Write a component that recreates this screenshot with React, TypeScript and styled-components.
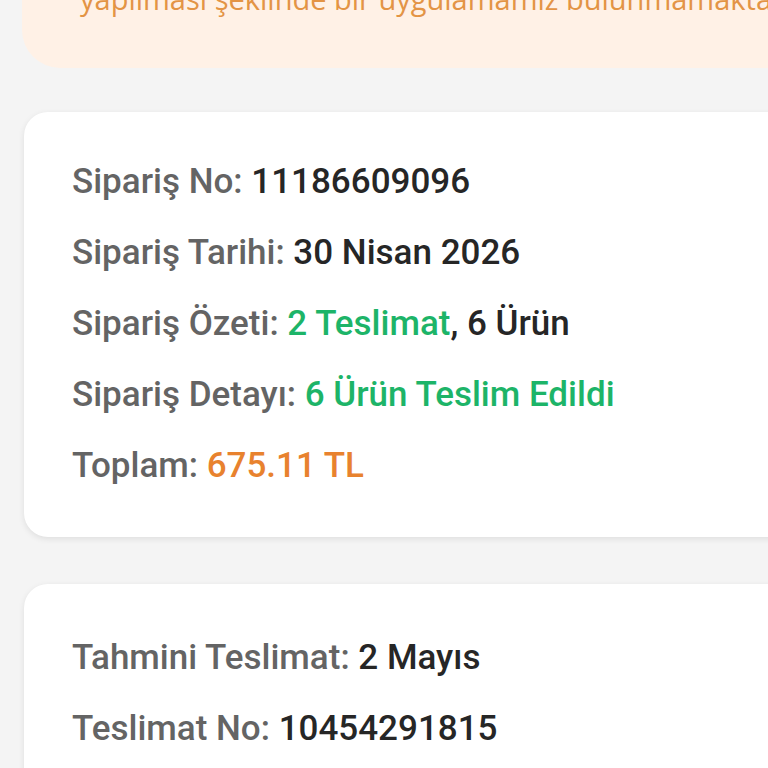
import React from "react";
import styled, { createGlobalStyle } from "styled-components";

const GlobalStyle = createGlobalStyle`
  html, body {
    margin: 0;
    padding: 0;
    background-color: #f4f4f4;
    overflow: hidden;
  }
`;

type Tone = "dark" | "green" | "orange";

const toneColor: Record<Tone, string> = {
  dark: "#262626",
  green: "#1db468",
  orange: "#e8822e",
};

const App: React.FC = () => {
  return (
    <>
      <GlobalStyle />
      <Page>
        <Notice>
          <NoticeText>yapılması şeklinde bir uygulamamız bulunmamaktadır.</NoticeText>
        </Notice>

        <OrderCard>
          <Row>
            <Label>Sipariş No: </Label>
            <Value>11186609096</Value>
          </Row>
          <Row>
            <Label>Sipariş Tarihi: </Label>
            <Value>30 Nisan 2026</Value>
          </Row>
          <Row>
            <Label>Sipariş Özeti: </Label>
            <Value $tone="green">2 Teslimat</Value>
            <Value>, 6 Ürün</Value>
          </Row>
          <Row>
            <Label>Sipariş Detayı: </Label>
            <Value $tone="green">6 Ürün Teslim Edildi</Value>
          </Row>
          <Row>
            <Label>Toplam: </Label>
            <Value $tone="orange">675.11 TL</Value>
          </Row>
        </OrderCard>

        <DeliveryCard>
          <Row>
            <Label>Tahmini Teslimat: </Label>
            <Value>2 Mayıs</Value>
          </Row>
          <Row>
            <Label>Teslimat No: </Label>
            <Value>10454291815</Value>
          </Row>
        </DeliveryCard>
      </Page>
    </>
  );
};

export default App;

const Page = styled.div`
  width: 820px;
  height: 768px;
  overflow: hidden;
  display: flex;
  flex-direction: column;
  font-family: Roboto, "Noto Sans", sans-serif;
`;

const Notice = styled.div`
  margin: -21px 0 0 22px;
  padding: 0 0 49px 58px;
  background-color: #fff1e6;
  border-radius: 0 0 0 38px;
`;

const NoticeText = styled.div`
  font-family: "Open Sans", "Noto Sans", sans-serif;
  font-size: 29px;
  line-height: 40px;
  color: #e39445;
  white-space: nowrap;
`;

const Card = styled.div`
  margin-left: 24px;
  background-color: #ffffff;
  border-radius: 24px;
  box-shadow: rgba(0, 0, 0, 0.09) 0px 2px 6px;
  padding-left: 48px;
  display: flex;
  flex-direction: column;
`;

const OrderCard = styled(Card)`
  margin-top: 44px;
  padding-top: 34px;
  padding-bottom: 36px;
`;

const DeliveryCard = styled(Card)`
  margin-top: 47px;
  padding-top: 38px;
  padding-bottom: 36px;
`;

const Row = styled.div`
  font-size: 35px;
  font-weight: 500;
  line-height: 71px;
  white-space: nowrap;
`;

const Label = styled.span`
  color: #646464;
`;

const Value = styled.span<{ $tone?: Tone }>`
  color: ${(p) => toneColor[p.$tone ?? "dark"]};
`;
